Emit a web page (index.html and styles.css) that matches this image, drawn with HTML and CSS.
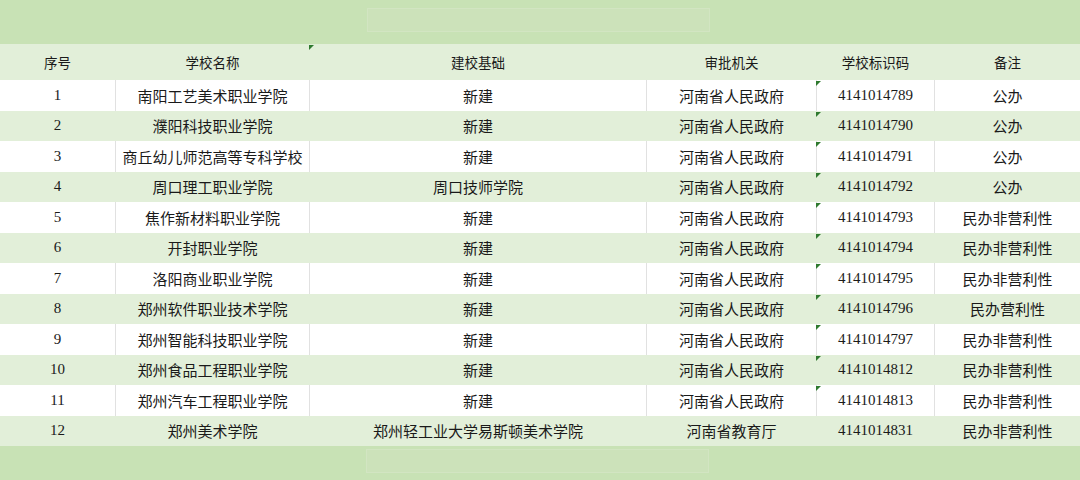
FILE: index.html
```html
<!DOCTYPE html>
<html lang="zh">
<head>
<meta charset="utf-8">
<title>学校名单</title>
<link rel="stylesheet" href="styles.css">
</head>
<body>
<div class="band band-top"><div class="ghost"></div></div>
<div class="table">
  <div class="row head">
    <div class="c">序号</div><div class="c">学校名称</div><div class="c mark">建校基础</div><div class="c">审批机关</div><div class="c">学校标识码</div><div class="c">备注</div>
  </div>
  <div class="row w"><div class="c">1</div><div class="c">南阳工艺美术职业学院</div><div class="c">新建</div><div class="c">河南省人民政府</div><div class="c num mark">4141014789</div><div class="c">公办</div></div>
  <div class="row g"><div class="c">2</div><div class="c">濮阳科技职业学院</div><div class="c">新建</div><div class="c">河南省人民政府</div><div class="c num mark">4141014790</div><div class="c">公办</div></div>
  <div class="row w"><div class="c">3</div><div class="c">商丘幼儿师范高等专科学校</div><div class="c">新建</div><div class="c">河南省人民政府</div><div class="c num mark">4141014791</div><div class="c">公办</div></div>
  <div class="row g"><div class="c">4</div><div class="c">周口理工职业学院</div><div class="c">周口技师学院</div><div class="c">河南省人民政府</div><div class="c num mark">4141014792</div><div class="c">公办</div></div>
  <div class="row w"><div class="c">5</div><div class="c">焦作新材料职业学院</div><div class="c">新建</div><div class="c">河南省人民政府</div><div class="c num mark">4141014793</div><div class="c">民办非营利性</div></div>
  <div class="row g"><div class="c">6</div><div class="c">开封职业学院</div><div class="c">新建</div><div class="c">河南省人民政府</div><div class="c num mark">4141014794</div><div class="c">民办非营利性</div></div>
  <div class="row w"><div class="c">7</div><div class="c">洛阳商业职业学院</div><div class="c">新建</div><div class="c">河南省人民政府</div><div class="c num mark">4141014795</div><div class="c">民办非营利性</div></div>
  <div class="row g"><div class="c">8</div><div class="c">郑州软件职业技术学院</div><div class="c">新建</div><div class="c">河南省人民政府</div><div class="c num mark">4141014796</div><div class="c">民办营利性</div></div>
  <div class="row w"><div class="c">9</div><div class="c">郑州智能科技职业学院</div><div class="c">新建</div><div class="c">河南省人民政府</div><div class="c num mark">4141014797</div><div class="c">民办非营利性</div></div>
  <div class="row g"><div class="c">10</div><div class="c">郑州食品工程职业学院</div><div class="c">新建</div><div class="c">河南省人民政府</div><div class="c num mark">4141014812</div><div class="c">民办非营利性</div></div>
  <div class="row w"><div class="c">11</div><div class="c">郑州汽车工程职业学院</div><div class="c">新建</div><div class="c">河南省人民政府</div><div class="c num mark">4141014813</div><div class="c">民办非营利性</div></div>
  <div class="row g"><div class="c">12</div><div class="c">郑州美术学院</div><div class="c">郑州轻工业大学易斯顿美术学院</div><div class="c">河南省教育厅</div><div class="c num">4141014831</div><div class="c">民办非营利性</div></div>
</div>
<div class="band band-bottom"><div class="ghost"></div></div>
</body>
</html>
```

FILE: styles.css
```css
html, body {
  margin: 0;
  padding: 0;
  background: #c8e2b5;
}
body {
  width: 1080px;
  height: 480px;
  overflow: hidden;
  font-family: "Liberation Serif", "Noto Sans CJK SC", serif;
  color: #1a1a1a;
}
.band {
  background: #c8e2b5;
  box-sizing: border-box;
}
.band-top {
  height: 44px;
  padding: 8px 0 0 367px;
}
.band-bottom {
  height: 34px;
  padding: 3px 0 0 366px;
}
.ghost {
  width: 343px;
  height: 24px;
  background: rgba(215, 228, 205, 0.25);
  border: 1px solid rgba(220, 235, 210, 0.35);
  box-sizing: border-box;
}
.table {
  display: flex;
  flex-direction: column;
}
.row {
  display: grid;
  grid-template-columns: 115px 194px 337px 170px 118px 146px;
  height: 30.5px;
  align-items: stretch;
}
.row.head {
  height: 36px;
  background: #e2efd9;
  font-size: 13.5px;
}
.row.g {
  background: #e2efd9;
  font-size: 15px;
}
.row.w {
  background: #ffffff;
  font-size: 15px;
}
.c {
  position: relative;
  display: flex;
  align-items: center;
  justify-content: center;
  white-space: nowrap;
}
.row.w .c + .c {
  border-left: 1px solid #e1e1e1;
}
.row.g .c + .c,
.row.head .c + .c {
  border-left: 1px solid #e2efd9;
}
.num {
  font-size: 15px;
}
.mark::before {
  content: "";
  position: absolute;
  left: -1px;
  top: 1px;
  width: 0;
  height: 0;
  border-top: 5px solid #2f7a2f;
  border-right: 5px solid transparent;
}
```
